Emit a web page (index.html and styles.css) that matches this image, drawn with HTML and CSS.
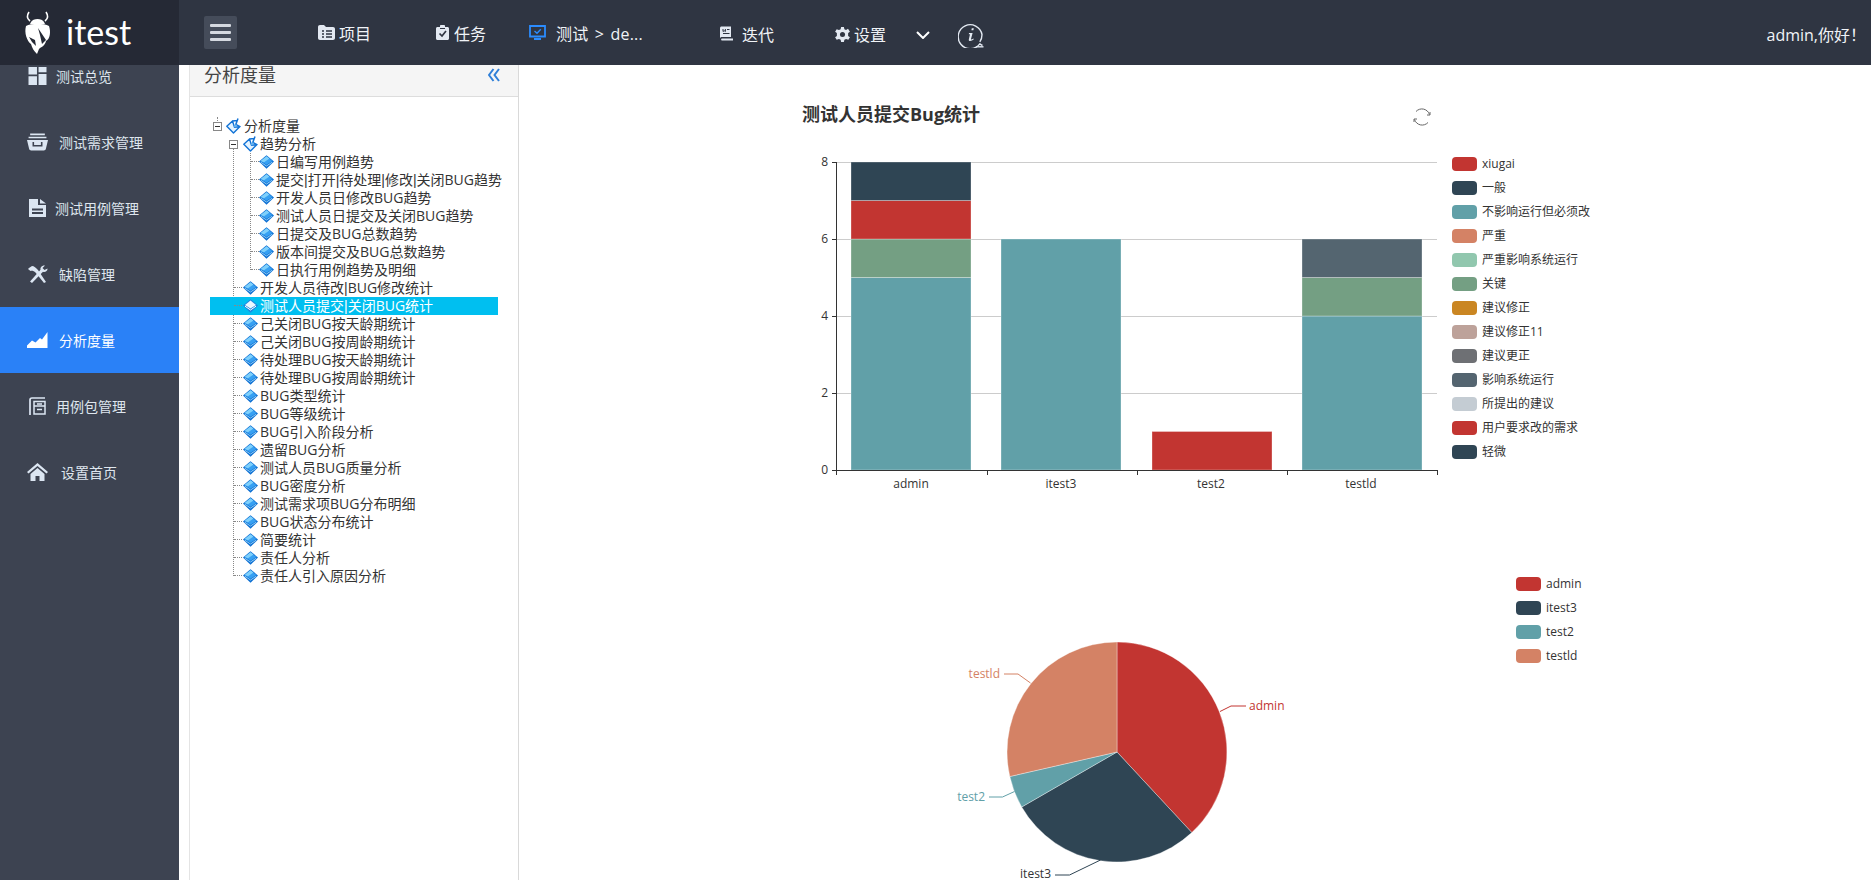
FILE: index.html
```html
<!DOCTYPE html>
<html lang="zh-CN">
<head>
<meta charset="utf-8">
<title>itest</title>
<link rel="stylesheet" href="styles.css">
</head>
<body>
<svg class="defs" width="0" height="0" aria-hidden="true">
  <symbol id="gem" viewBox="0 0 15 14">
    <path d="M7.5 .2 15 6.5 7.5 13.8 0 6.5Z" fill="#0d6fd2"/>
    <path d="M7.5 1.2 13.4 6 7.5 9.8 1.6 6Z" fill="#37a0f2"/>
    <path d="M7.5 1.2 10.5 3.600 5 7.300 1.600 6Z" fill="#7fd0fb"/>
    <path d="M1.800 7.200 7.500 11 13.200 7.200" fill="none" stroke="#9ed8fb" stroke-width=".9"/>
  </symbol>
  <symbol id="gem-on" viewBox="0 0 15 14">
    <path d="M7.5 .2 15 6.5 7.5 13.8 0 6.5Z" fill="#1f86e0"/>
    <path d="M7.5 1.6 13 6 7.5 9.6 2 6Z" fill="#eaf8ff"/>
    <path d="M2 7.200 7.500 11 13 7.200" fill="none" stroke="#fff" stroke-width="1"/>
  </symbol>
  <symbol id="open" viewBox="0 0 15 16">
    <path d="M6.500 3 .8 8.200 7.500 15 14 8.600 8.500 9.200 6.500 3Z" fill="#e4f3ff" stroke="#1273d6" stroke-width="1.400" stroke-linejoin="round"/>
    <path d="M6.500 3 11.500 2.500M12 .5 9.800 6.500 14 8.600" fill="none" stroke="#1273d6" stroke-width="1.500"/>
    <path d="M10 6.500 8.500 9.200" fill="none" stroke="#5fb6f5" stroke-width="1.500"/>
  </symbol>
</svg>

<header class="topbar">
  <div class="logo">
    <svg class="logo-bug" viewBox="0 0 27 43">
      <path d="M6 10C2 7 3 4 5 1M21 10C25 7 24 4 22 1" fill="none" stroke="#fff" stroke-width="1.6"/>
      <path d="M7 11C9 7 18 7 20 11L21 13H6Z" fill="#fff"/>
      <path d="M2 15C7 12 20 12 25 15C27 21 26 28 22 30C21 35 17 36 15 38L13 43C10 40 8 37 7 33C3 30 0 22 2 15Z" fill="#fff"/>
      <path d="M14 17 22 29 18 33 16 24ZM5 26 11 29 12 35 8 31Z" fill="#252935"/>
    </svg>
    <span class="logo-text">itest</span>
  </div>
  <button class="burger" type="button" aria-label="menu">
    <span class="burger-line"></span><span class="burger-line"></span><span class="burger-line"></span>
  </button>
  <nav class="topnav">
    <a class="topnav-item item-project">
      <svg class="ti ti-17" viewBox="0 0 17 15"><path d="M0 2C0 .8.8 0 2 0H6L8 2H15C16.200 2 17 2.800 17 4V13C17 14.200 16.200 15 15 15H2C.8 15 0 14.200 0 13Z" fill="#e3e9f2"/><path d="M4 6H6M8 6H14M4 9H6M8 9H14M4 12H6M8 12H14" stroke="#2f3542" stroke-width="1.500"/></svg>
      <span>项目</span>
    </a>
    <a class="topnav-item item-task">
      <svg class="ti ti-13" viewBox="0 0 13 15"><path d="M1.500 2H4V1C4 .4 4.500 0 5 0H8C8.500 0 9 .4 9 1V2H11.500C12.300 2 13 2.700 13 3.500V13.500C13 14.300 12.300 15 11.500 15H1.500C.7 15 0 14.300 0 13.500V3.500C0 2.700.7 2 1.500 2Z" fill="#e3e9f2"/><path d="M3.500 8.500 6 11 10 6" fill="none" stroke="#2f3542" stroke-width="1.700"/><path d="M4 3.500H9" stroke="#2f3542" stroke-width="1"/></svg>
      <span>任务</span>
    </a>
    <a class="topnav-item item-test">
      <svg class="ti ti-17 ti-test" viewBox="0 0 17 15"><path d="M1 1H16V11.500H1ZM5 14H12" fill="none" stroke="#2b8cff" stroke-width="1.800"/><path d="M5.500 6 8 8.300 11.800 4.300" fill="none" stroke="#2b8cff" stroke-width="1.400"/></svg>
      <span class="test-label">测试 &gt; de...</span>
    </a>
    <a class="topnav-item item-iter low-a">
      <svg class="ti ti-13" viewBox="0 0 13 14"><path d="M0 1.500C0 .7.700 0 1.500 0H11V10.500H2C.9 10.500 0 11 0 12Z" fill="#e3e9f2"/><path d="M2 12H13V14H2C.8 14 .8 12 2 12Z" fill="#e3e9f2"/><path d="M3 2.500V5L4.200 4.200 5.400 5V2.500M7 3H9.500M3 7H9.500" fill="none" stroke="#2f3542" stroke-width="1"/></svg>
      <span>迭代</span>
    </a>
    <a class="topnav-item item-set low-b">
      <svg class="ti ti-15" viewBox="0 0 16 16"><path d="M6.500 0H9.500L10 2.300 11.800 3.100 13.800 1.900 14.200 2.300 14.100 2.200 15.900 5 14 6.500V9.500L15.900 11 14.200 13.700 11.800 12.900 10 13.700 9.500 16H6.500L6 13.700 4.200 12.900 1.800 13.700.1 11 2 9.500V6.500L.1 5 1.800 2.300 4.200 3.100 6 2.300Z" fill="#e3e9f2"/><circle cx="8" cy="8" r="2.700" fill="#2f3542"/></svg>
      <span>设置</span>
    </a>
    <svg class="caret" viewBox="0 0 14 8"><path d="M1 1 7 7 13 1" fill="none" stroke="#fff" stroke-width="2"/></svg>
    <svg class="info" viewBox="0 0 26 26"><path d="M24.500 23.500C23 22.800 22.500 22.500 21.800 21.900A12 12 0 1 1 24 12.500C24 15.500 23 18.300 21.800 19.900" fill="none" stroke="#e3e9f2" stroke-width="1.400"/><path d="M18 24.800H25.500" stroke="#e3e9f2" stroke-width="1.400"/><path d="M13.800 6.200H15.800L15.400 8.200H13.400ZM11 11H14.600L13 17C12.800 17.800 13.800 17.800 15.400 16.500L15.800 17.300C13.800 19.300 10.400 19.800 10.800 17.500L12 12.200H10.800Z" fill="#e3e9f2"/></svg>
  </nav>
  <div class="user">admin,你好！</div>
</header>

<div class="workspace">
  <aside class="sidebar">
    <a class="side-item">
      <svg class="si" viewBox="0 0 17 17"><path d="M0 0H8V7H0ZM9.500 0H17V5H9.500ZM0 8.800H8V17H0ZM9.500 6.500H17V17H9.500Z" fill="#dce6f2"/></svg>
      <span class="side-text t-56">测试总览</span>
    </a>
    <a class="side-item">
      <svg class="si" viewBox="0 0 20 16"><path d="M3 0H17V1.500H3ZM1.500 3H18.500V4.500H1.500Z" fill="#dce6f2"/><path d="M0 6H20L18 14.500C17.800 15.400 17 16 16 16H4C3 16 2.200 15.400 2 14.500Z" fill="#dce6f2"/><path d="M6 8V11.500H14V8" fill="none" stroke="#3d4351" stroke-width="1.500"/></svg>
      <span class="side-text t-59">测试需求管理</span>
    </a>
    <a class="side-item">
      <svg class="si" viewBox="0 0 17 18"><path d="M0 0H9V6H17V18H0Z" fill="#dce6f2"/><path d="M11 0 17 4.500H11Z" fill="#dce6f2"/><path d="M3 10.500H14M3 14H14" stroke="#3d4351" stroke-width="1.800"/></svg>
      <span class="side-text t-55">测试用例管理</span>
    </a>
    <a class="side-item">
      <svg class="si" viewBox="0 0 21 18"><path d="M2 3 5 1C7 1 9 3 11 5L19 17 17 18 8.500 7.500C7 6 5 5.500 3.500 6L1 4Z" fill="#dce6f2"/><path d="M20.500 3.500C20.800 6 18 7.500 16 6.800L5 18 3 16.500 13.500 4.800C13 2.500 15 0 18 .5L15.500 3 17.500 5Z" fill="#dce6f2"/></svg>
      <span class="side-text t-59">缺陷管理</span>
    </a>
    <a class="side-item is-active">
      <svg class="si" viewBox="0 0 21 16"><path d="M0 16V13.500L5 8.500 8.500 10.500 13 6 15 7.500 20.500 0V16Z" fill="#fff"/></svg>
      <span class="side-text t-59">分析度量</span>
    </a>
    <a class="side-item">
      <svg class="si" viewBox="0 0 17 18"><path d="M1 18V3C1 1.500 2 1 3 1H16" fill="none" stroke="#dce6f2" stroke-width="1.700"/><path d="M5 4.500H16V17H5ZM5 9H16M8 12.500H13M8 7H13" fill="none" stroke="#dce6f2" stroke-width="1.500"/></svg>
      <span class="side-text t-56">用例包管理</span>
    </a>
    <a class="side-item">
      <svg class="si" viewBox="0 0 21 18"><path d="M10.500 0 21 9 19.500 10.500 10.500 3 1.500 10.500 0 9Z" fill="#dce6f2"/><path d="M3.500 11 10.500 5 17.500 11V18H12.500V13H8.500V18H3.500Z" fill="#dce6f2"/></svg>
      <span class="side-text t-61">设置首页</span>
    </a>
  </aside>

  <section class="panel">
    <div class="panel-head">
      <h2 class="panel-title">分析度量</h2>
      <svg class="collapse" viewBox="0 0 12 14"><path d="M5.500 1 1 7 5.500 13M11 1 6.500 7 11 13" fill="none" stroke="#2f7fd8" stroke-width="2"/></svg>
    </div>
    <div class="tree">
      <div class="row l0"><span class="toggle"></span><svg class="ic-open"><use href="#open"/></svg><span>分析度量</span></div>
      <div class="group-root">
        <div class="row l1"><span class="toggle"></span><svg class="ic-open"><use href="#open"/></svg><span>趋势分析</span></div>
        <div class="group-sub">
          <div class="row l2"><svg class="ic"><use href="#gem"/></svg><span>日编写用例趋势</span></div>
          <div class="row l2"><svg class="ic"><use href="#gem"/></svg><span>提交<i class="pipe">|</i>打开<i class="pipe">|</i>待处理<i class="pipe">|</i>修改<i class="pipe">|</i>关闭BUG趋势</span></div>
          <div class="row l2"><svg class="ic"><use href="#gem"/></svg><span>开发人员日修改BUG趋势</span></div>
          <div class="row l2"><svg class="ic"><use href="#gem"/></svg><span>测试人员日提交及关闭BUG趋势</span></div>
          <div class="row l2"><svg class="ic"><use href="#gem"/></svg><span>日提交及BUG总数趋势</span></div>
          <div class="row l2"><svg class="ic"><use href="#gem"/></svg><span>版本间提交及BUG总数趋势</span></div>
          <div class="row l2"><svg class="ic"><use href="#gem"/></svg><span>日执行用例趋势及明细</span></div>
        </div>
        <div class="row leaf"><svg class="ic"><use href="#gem"/></svg><span>开发人员待改<i class="pipe">|</i>BUG修改统计</span></div>
        <div class="row leaf is-selected"><svg class="ic"><use href="#gem-on"/></svg><span>测试人员提交<i class="pipe">|</i>关闭BUG统计</span></div>
        <div class="row leaf"><svg class="ic"><use href="#gem"/></svg><span>己关闭BUG按天龄期统计</span></div>
        <div class="row leaf"><svg class="ic"><use href="#gem"/></svg><span>己关闭BUG按周龄期统计</span></div>
        <div class="row leaf"><svg class="ic"><use href="#gem"/></svg><span>待处理BUG按天龄期统计</span></div>
        <div class="row leaf"><svg class="ic"><use href="#gem"/></svg><span>待处理BUG按周龄期统计</span></div>
        <div class="row leaf"><svg class="ic"><use href="#gem"/></svg><span>BUG类型统计</span></div>
        <div class="row leaf"><svg class="ic"><use href="#gem"/></svg><span>BUG等级统计</span></div>
        <div class="row leaf"><svg class="ic"><use href="#gem"/></svg><span>BUG引入阶段分析</span></div>
        <div class="row leaf"><svg class="ic"><use href="#gem"/></svg><span>遗留BUG分析</span></div>
        <div class="row leaf"><svg class="ic"><use href="#gem"/></svg><span>测试人员BUG质量分析</span></div>
        <div class="row leaf"><svg class="ic"><use href="#gem"/></svg><span>BUG密度分析</span></div>
        <div class="row leaf"><svg class="ic"><use href="#gem"/></svg><span>测试需求项BUG分布明细</span></div>
        <div class="row leaf"><svg class="ic"><use href="#gem"/></svg><span>BUG状态分布统计</span></div>
        <div class="row leaf"><svg class="ic"><use href="#gem"/></svg><span>简要统计</span></div>
        <div class="row leaf"><svg class="ic"><use href="#gem"/></svg><span>责任人分析</span></div>
        <div class="row leaf"><svg class="ic"><use href="#gem"/></svg><span>责任人引入原因分析</span></div>
      </div>
    </div>
  </section>

  <main class="main">
    <svg class="chart chart-bar" viewBox="790 100 860 420">
      <text class="chart-title" x="802" y="121">测试人员提交Bug统计</text>
      <g class="refresh">
        <path d="M1416 111.500A8 8 0 0 1 1429.500 114.500M1428 122.500A8 8 0 0 1 1414.500 119.500"/>
        <path d="M1430 112V115H1427M1414 122V119H1417"/>
      </g>
      <g class="grid">
        <path d="M837 162.500H1437M837 239.500H1437M837 316.500H1437M837 393.500H1437"/>
      </g>
      <rect class="bar c-teal" x="851" y="277.500" width="120" height="192.500"/>
      <rect class="bar c-green" x="851" y="239" width="120" height="38.500"/>
      <rect class="bar c-red" x="851" y="200.500" width="120" height="38.500"/>
      <rect class="bar c-navy" x="851" y="162" width="120" height="38.500"/>
      <rect class="bar c-teal" x="1001" y="239" width="120" height="231"/>
      <rect class="bar c-red" x="1152" y="431.500" width="120" height="38.500"/>
      <rect class="bar c-teal" x="1302" y="316" width="120" height="154"/>
      <rect class="bar c-green" x="1302" y="277.500" width="120" height="38.500"/>
      <rect class="bar c-slate" x="1302" y="239" width="120" height="38.500"/>
      <path class="axis" d="M836.500 162V475M832 162.500H837M832 239.500H837M832 316.500H837M832 393.500H837M832 470.500H1437M987.500 470V475M1137.500 470V475M1287.500 470V475M1437.500 470V475"/>
      <text class="lbl end" x="828" y="166">8</text>
      <text class="lbl end" x="828" y="243">6</text>
      <text class="lbl end" x="828" y="320">4</text>
      <text class="lbl end" x="828" y="397">2</text>
      <text class="lbl end" x="828" y="474">0</text>
      <text class="lbl mid" x="911" y="488">admin</text>
      <text class="lbl mid" x="1061" y="488">itest3</text>
      <text class="lbl mid" x="1211" y="488">test2</text>
      <text class="lbl mid" x="1361" y="488">testld</text>

      <rect class="sw c-red" x="1452" y="157" width="25" height="14" rx="4"/><text class="lbl" x="1482" y="168">xiugai</text>
      <rect class="sw c-navy" x="1452" y="181" width="25" height="14" rx="4"/><text class="lbl" x="1482" y="192">一般</text>
      <rect class="sw c-teal" x="1452" y="205" width="25" height="14" rx="4"/><text class="lbl" x="1482" y="216">不影响运行但必须改</text>
      <rect class="sw c-salmon" x="1452" y="229" width="25" height="14" rx="4"/><text class="lbl" x="1482" y="240">严重</text>
      <rect class="sw c-mint" x="1452" y="253" width="25" height="14" rx="4"/><text class="lbl" x="1482" y="264">严重影响系统运行</text>
      <rect class="sw c-green" x="1452" y="277" width="25" height="14" rx="4"/><text class="lbl" x="1482" y="288">关键</text>
      <rect class="sw c-gold" x="1452" y="301" width="25" height="14" rx="4"/><text class="lbl" x="1482" y="312">建议修正</text>
      <rect class="sw c-tan" x="1452" y="325" width="25" height="14" rx="4"/><text class="lbl" x="1482" y="336">建议修正11</text>
      <rect class="sw c-gray" x="1452" y="349" width="25" height="14" rx="4"/><text class="lbl" x="1482" y="360">建议更正</text>
      <rect class="sw c-slate" x="1452" y="373" width="25" height="14" rx="4"/><text class="lbl" x="1482" y="384">影响系统运行</text>
      <rect class="sw c-pale" x="1452" y="397" width="25" height="14" rx="4"/><text class="lbl" x="1482" y="408">所提出的建议</text>
      <rect class="sw c-red" x="1452" y="421" width="25" height="14" rx="4"/><text class="lbl" x="1482" y="432">用户要求改的需求</text>
      <rect class="sw c-navy" x="1452" y="445" width="25" height="14" rx="4"/><text class="lbl" x="1482" y="456">轻微</text>
    </svg>

    <svg class="chart chart-pie" viewBox="940 520 660 360">
      <path class="slice c-red" d="M1117 752V642A110 110 0 0 1 1191.800 832.600Z"/>
      <path class="slice c-navy" d="M1117 752 1191.800 832.600A110 110 0 0 1 1021.700 807Z"/>
      <path class="slice c-teal" d="M1117 752 1021.700 807A110 110 0 0 1 1009.800 776.500Z"/>
      <path class="slice c-salmon" d="M1117 752 1009.800 776.500A110 110 0 0 1 1117 642Z"/>
      <path class="lead s-red" d="M1220 711.500 1231 706H1246"/>
      <path class="lead s-salmon" d="M1030.500 683 1018 674H1004"/>
      <path class="lead s-teal" d="M1014.500 791.500 1002.500 797H989"/>
      <path class="lead s-navy" d="M1100.500 860 1069.500 875H1055"/>
      <text class="lbl t-red" x="1249" y="710">admin</text>
      <text class="lbl t-salmon end" x="1000" y="678">testld</text>
      <text class="lbl t-teal end" x="985" y="801">test2</text>
      <text class="lbl end" x="1051" y="878">itest3</text>

      <rect class="sw c-red" x="1516" y="577" width="25" height="14" rx="4"/><text class="lbl" x="1546" y="588">admin</text>
      <rect class="sw c-navy" x="1516" y="601" width="25" height="14" rx="4"/><text class="lbl" x="1546" y="612">itest3</text>
      <rect class="sw c-teal" x="1516" y="625" width="25" height="14" rx="4"/><text class="lbl" x="1546" y="636">test2</text>
      <rect class="sw c-salmon" x="1516" y="649" width="25" height="14" rx="4"/><text class="lbl" x="1546" y="660">testld</text>
    </svg>
  </main>
</div>
</body>
</html>
```

FILE: styles.css
```css
* { box-sizing: border-box; }
html, body { height: 100%; }
body {
  margin: 0;
  height: 880px;
  overflow: hidden;
  display: flex;
  flex-direction: column;
  font-family: "Open Sans", "Noto Sans CJK SC", sans-serif;
  font-size: 14px;
  color: #333;
  background: #fff;
}
.defs { position: absolute; }

/* top bar */
.topbar {
  flex: 0 0 65px;
  display: flex;
  align-items: center;
  background: #2f3542;
  color: #f0f3f7;
  position: relative;
  z-index: 2;
}
.logo {
  flex: 0 0 179px;
  height: 65px;
  display: flex;
  align-items: center;
  padding-left: 24px;
  background: #252935;
}
.logo-bug { width: 27px; height: 43px; margin-right: 15px; }
.logo-text {
  font-family: "Lato", sans-serif;
  font-size: 34px;
  font-weight: 400;
  color: #fff;
  line-height: 1;
  margin-top: -2px;
}
.burger {
  flex: 0 0 33px;
  height: 33px;
  margin-left: 25px;
  padding: 0 6px;
  border: 0;
  border-radius: 2px;
  background: #454c5a;
  display: flex;
  flex-direction: column;
  justify-content: center;
  gap: 4px;
}
.burger-line { display: block; height: 3px; background: #d5d9e0; border-radius: 1px; }
.topnav { display: flex; align-items: center; height: 65px; font-size: 16px; }
.topnav-item { display: flex; align-items: center; gap: 4px; white-space: nowrap; }
.item-project { margin-left: 81px; }
.item-task { margin-left: 65px; gap: 5px; }
.item-test { margin-left: 43px; gap: 10px; }
.test-label { word-spacing: 2px; letter-spacing: .2px; }
.item-iter { margin-left: 77px; gap: 9px; }
.item-set { margin-left: 61px; }
.low-a { padding-top: 2px; }
.low-b { padding-top: 3px; }
.ti { display: block; height: 15px; }
.ti-17 { width: 17px; }
.ti-15 { width: 15px; }
.ti-13 { width: 13px; }
.ti-test { color: #2b8cff; }
.caret { width: 14px; height: 8px; margin-left: 30px; margin-top: 5px; }
.info { width: 26px; height: 26px; margin-left: 28px; margin-top: 4px; }
.user { margin-left: auto; padding-right: 5px; font-size: 16px; padding-top: 3px; white-space: nowrap; }

/* workspace */
.workspace { flex: 1; display: flex; min-height: 0; overflow: hidden; }

/* sidebar */
.sidebar {
  flex: 0 0 179px;
  background: #3d4351;
  color: #dfe6ee;
  overflow: hidden;
}
.side-item {
  display: flex;
  align-items: center;
  height: 66px;
  padding-left: 27px;
}
.side-item:first-child { margin-top: -22px; }
.si { flex: 0 0 21px; width: 21px; height: 18px; }
.side-text { white-space: nowrap; }
.t-55 { margin-left: 7px; }
.t-56 { margin-left: 8px; }
.t-59 { margin-left: 11px; }
.t-61 { margin-left: 13px; }
.is-active { background: #2a81f7; color: #fff; }

/* tree panel */
.panel {
  flex: 0 0 330px;
  margin-left: 10px;
  border-left: 1px solid #e4e4e4;
  border-right: 1px solid #d9d9d9;
  background: #fff;
}
.panel-head {
  height: 32px;
  padding: 0 18px 12px 14px;
  display: flex;
  align-items: center;
  justify-content: space-between;
  background: #f5f5f5;
  border-bottom: 1px solid #ddd;
}
.panel-title { margin: 0; font-size: 18px; font-weight: 400; line-height: 1; color: #444; }
.collapse { width: 12px; height: 14px; }
.tree { padding-top: 20px; margin-left: 20px; width: 288px; }
.row {
  display: flex;
  align-items: center;
  height: 18px;
  white-space: nowrap;
  line-height: 18px;
  position: relative;
}
.pipe { font-family: "Liberation Sans", sans-serif; font-style: normal; }
.toggle {
  flex: 0 0 9px;
  height: 9px;
  border: 1px solid #888;
  background: #fff;
  position: relative;
}
.toggle::after {
  content: "";
  position: absolute;
  left: 1px;
  right: 1px;
  top: 3px;
  height: 1px;
  background: #333;
}
.ic { flex: 0 0 15px; width: 15px; height: 14px; margin-right: 2px; }
.ic-open { flex: 0 0 15px; width: 15px; height: 16px; margin-right: 3px; }
.l0 { padding-left: 3px; }
.l0 .toggle { margin-right: 4px; }
.l0::before {
  content: "";
  position: absolute;
  left: 7px;
  top: 0;
  height: 4px;
  border-left: 1px dotted #888;
}
.l1 { padding-left: 19px; }
.l1 .toggle { margin-right: 5px; }
.l1 .ic-open { margin-right: 2px; }
.group-root, .group-sub { position: relative; }
.group-root::before {
  content: "";
  position: absolute;
  left: 23px;
  top: 13px;
  bottom: 9px;
  border-left: 1px dotted #888;
}
.group-sub::before {
  content: "";
  position: absolute;
  left: 40px;
  top: 0;
  bottom: 9px;
  border-left: 1px dotted #888;
}
.l2 { padding-left: 49px; }
.leaf { padding-left: 33px; }
.l2::before, .leaf::before {
  content: "";
  position: absolute;
  top: 8px;
  width: 8px;
  border-top: 1px dotted #888;
}
.l2::before { left: 41px; }
.leaf::before { left: 24px; }
.is-selected { background: #00bff0; color: #fff; }

/* charts */
.main { flex: 1; min-width: 0; display: flex; flex-direction: column; padding-top: 35px; background: #fff; }
.chart { display: block; flex: none; }
.chart-bar { width: 860px; height: 420px; margin-left: 271px; }
.chart-pie { width: 660px; height: 360px; margin-left: 421px; }
.chart text { font-family: "Open Sans", "Noto Sans CJK SC", sans-serif; }
.chart-title { font-size: 18px; font-weight: 700; fill: #333; }
.lbl { font-size: 12px; fill: #333; }
.end { text-anchor: end; }
.mid { text-anchor: middle; }
.grid path { stroke: #ccc; stroke-width: 1; fill: none; }
.axis { stroke: #333; stroke-width: 1; fill: none; }
.bar { stroke: #fff; stroke-opacity: .3; stroke-width: 1; }
.refresh path { fill: none; stroke: #666; stroke-width: 1; }
.slice { stroke: #fff; stroke-opacity: .5; stroke-width: .7; }
.lead { fill: none; stroke-width: 1; }
.c-red { fill: #c23531; }
.c-navy { fill: #2f4554; }
.c-teal { fill: #61a0a8; }
.c-salmon { fill: #d48265; }
.c-mint { fill: #91c7ae; }
.c-green { fill: #749f83; }
.c-gold { fill: #ca8622; }
.c-tan { fill: #bda29a; }
.c-gray { fill: #6e7074; }
.c-slate { fill: #546570; }
.c-pale { fill: #c4ccd3; }
.s-red { stroke: #c23531; }
.s-navy { stroke: #2f4554; }
.s-teal { stroke: #61a0a8; }
.s-salmon { stroke: #d48265; }
.chart .t-red { fill: #c23531; }
.chart .t-teal { fill: #61a0a8; }
.chart .t-salmon { fill: #d48265; }
```
